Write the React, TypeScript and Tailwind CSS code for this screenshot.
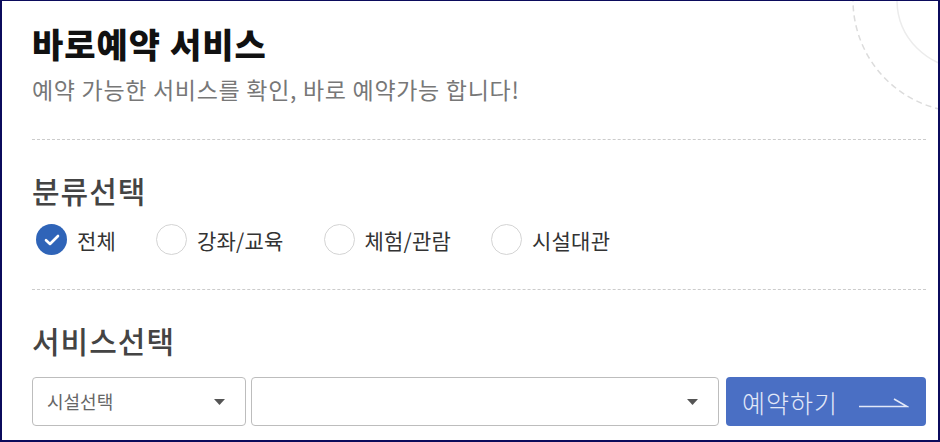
import { useState } from "react";

/**
 * 바로예약 서비스 - 분류 선택 + 서비스 선택 폼
 */

type Category = { id: string; label: string };

const CATEGORIES: Category[] = [
  { id: "all", label: "전체" },
  { id: "edu", label: "강좌/교육" },
  { id: "exp", label: "체험/관람" },
  { id: "fac", label: "시설대관" },
];

function Caret() {
  return (
    <svg width="11" height="6" viewBox="0 0 11 6" className="shrink-0">
      <path d="M0 0h11L5.5 6z" fill="#555" />
    </svg>
  );
}

function Radio({ checked }: { checked: boolean }) {
  if (checked) {
    return (
      <span className="flex h-[31px] w-[31px] shrink-0 items-center justify-center rounded-full bg-[#2f64b8]">
        <svg width="16" height="12" viewBox="0 0 16 12">
          <path d="M2 6.2l4 3.8 8-8" fill="none" stroke="#fff" strokeWidth="2.6" strokeLinecap="round" strokeLinejoin="round" />
        </svg>
      </span>
    );
  }
  return <span className="h-[31px] w-[31px] shrink-0 rounded-full border-[1.5px] border-[#d4d4d4] bg-white" />;
}

export default function App() {
  const [cat, setCat] = useState("all");

  return (
    <div
      className="relative h-[442px] w-[940px] overflow-hidden border-t border-r-2 border-b-2 border-l-2 border-[#0b0b5c] bg-white"
      style={{ fontFamily: '"Noto Sans CJK KR", "Noto Sans", sans-serif' }}
    >
      {/* 장식 원 (중심: 페이지 기준 x=965, y=0) */}
      <svg className="pointer-events-none absolute top-[-1px] right-[-2px]" width="160" height="160" viewBox="0 0 160 160">
        <circle cx="185" cy="0" r="68" fill="none" stroke="#ececec" strokeWidth="1.5" />
        <circle cx="185" cy="0" r="112" fill="none" stroke="#dcdcdc" strokeWidth="1.5" strokeDasharray="6 4" />
      </svg>

      <div className="relative pt-[23px] pr-[12px] pl-[30px]">
        {/* 헤더 */}
        <h1 className="text-[34px] leading-[40px] font-black tracking-[1px] text-[#111]">바로예약 서비스</h1>
        <p className="mt-[11px] text-[23px] leading-[28px] tracking-[0.7px] text-[#777]">
          예약 가능한 서비스를 확인, 바로 예약가능 합니다!
        </p>

        <div className="mt-[36px] border-t border-dashed border-[#cccccc]" />

        {/* 분류선택 */}
        <h2 className="mt-[32px] text-[30px] leading-[36px] font-medium tracking-[1px] text-[#444]">분류선택</h2>
        <div className="mt-[16px] flex items-center gap-[40px] pl-[4px]">
          {CATEGORIES.map((c) => (
            <button key={c.id} onClick={() => setCat(c.id)} className="flex items-center gap-[10px]">
              <Radio checked={cat === c.id} />
              <span className="text-[21px] leading-[28px] tracking-[0.2px] text-[#333]">{c.label}</span>
            </button>
          ))}
        </div>

        <div className="mt-[34px] border-t border-dashed border-[#cccccc]" />

        {/* 서비스선택 */}
        <h2 className="mt-[32px] text-[30px] leading-[36px] font-medium tracking-[1px] text-[#444]">서비스선택</h2>
        <div className="mt-[19px] flex h-[49px] items-stretch">
          <div className="flex w-[214px] items-center justify-between rounded-[4px] border border-[#bdbdbd] pr-[20px] pl-[14px]">
            <span className="text-[18px] text-[#666]">시설선택</span>
            <Caret />
          </div>
          <div className="ml-[5px] flex w-[468px] items-center justify-end rounded-[4px] border border-[#bdbdbd] pr-[20px]">
            <Caret />
          </div>
          <button className="ml-[7px] flex w-[200px] items-center rounded-[4px] bg-[#4a6fc4] pl-[16px]">
            <span className="text-[25px] leading-[30px] font-light tracking-[1px] text-[#e2e8f8]">예약하기</span>
            <svg className="ml-[21px]" width="50" height="12" viewBox="0 0 50 12">
              <path d="M0 10.5h48L35 3" fill="none" stroke="#e2e8f8" strokeWidth="1.5" />
            </svg>
          </button>
        </div>
      </div>
    </div>
  );
}
